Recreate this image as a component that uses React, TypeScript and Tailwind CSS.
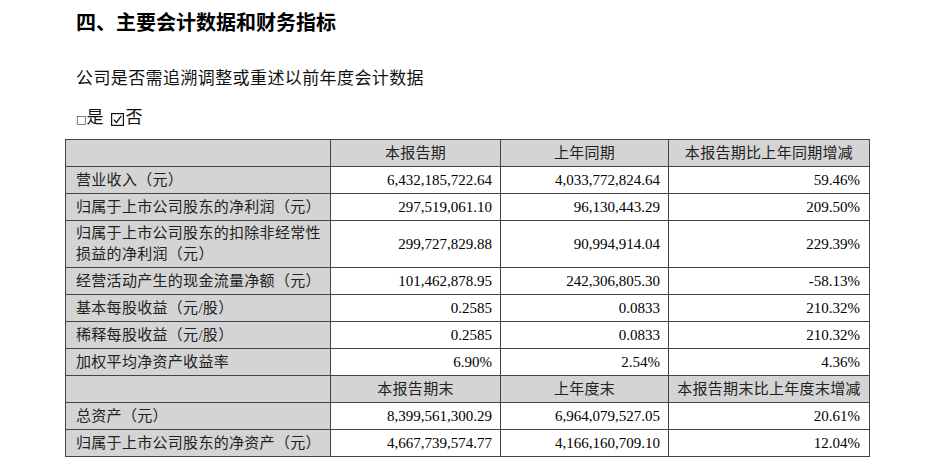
const font = "font-['Liberation_Serif','Noto_Sans_CJK_SC',serif]";

type Row = { label: string[]; cur: string; prev: string; change: string };

const top: Row[] = [
  { label: ["营业收入（元）"], cur: "6,432,185,722.64", prev: "4,033,772,824.64", change: "59.46%" },
  { label: ["归属于上市公司股东的净利润（元）"], cur: "297,519,061.10", prev: "96,130,443.29", change: "209.50%" },
  {
    label: ["归属于上市公司股东的扣除非经常性", "损益的净利润（元）"],
    cur: "299,727,829.88",
    prev: "90,994,914.04",
    change: "229.39%",
  },
  { label: ["经营活动产生的现金流量净额（元）"], cur: "101,462,878.95", prev: "242,306,805.30", change: "-58.13%" },
  { label: ["基本每股收益（元/股）"], cur: "0.2585", prev: "0.0833", change: "210.32%" },
  { label: ["稀释每股收益（元/股）"], cur: "0.2585", prev: "0.0833", change: "210.32%" },
  { label: ["加权平均净资产收益率"], cur: "6.90%", prev: "2.54%", change: "4.36%" },
];

const bottom: Row[] = [
  { label: ["总资产（元）"], cur: "8,399,561,300.29", prev: "6,964,079,527.05", change: "20.61%" },
  { label: ["归属于上市公司股东的净资产（元）"], cur: "4,667,739,574.77", prev: "4,166,160,709.10", change: "12.04%" },
];

function HeaderRow({ cols }: { cols: string[] }) {
  return (
    <tr className="h-[27px] bg-[#d4d4d4] text-[#222]">
      <td className="border border-[#444]" />
      {cols.map((c) => (
        <td key={c} className="border border-[#444] text-center tracking-[0.3px]">
          {c}
        </td>
      ))}
    </tr>
  );
}

function DataRow({ row }: { row: Row }) {
  const tall = row.label.length > 1;
  return (
    <tr className={tall ? "h-[47px]" : "h-[27px]"}>
      <td className="border border-[#444] bg-[#d4d4d4] pl-[10px] leading-[21px] tracking-[0.3px] text-[#222]">
        {row.label.map((l) => (
          <div key={l}>{l}</div>
        ))}
      </td>
      <td className="border border-[#444] pr-[8px] text-right">{row.cur}</td>
      <td className="border border-[#444] pr-[8px] text-right">{row.prev}</td>
      <td className="border border-[#444] pr-[9px] text-right">{row.change}</td>
    </tr>
  );
}

function CheckedBox() {
  return (
    <svg width="13" height="13" viewBox="0 0 13 13" className="mr-[1px] ml-[8px] self-center">
      <rect x="0.6" y="0.6" width="11.8" height="11.8" fill="none" stroke="#111" strokeWidth="1.2" />
      <path d="M2.8 6.6 L5.4 9.4 L10.4 2.8" fill="none" stroke="#111" strokeWidth="1.3" />
    </svg>
  );
}

export default function App() {
  return (
    <div className={`${font} min-h-[465px] w-[945px] bg-white pt-[8px] text-black`}>
      <h1 className="pl-[76px] text-[20px] leading-[28px] font-bold font-['Noto_Sans_CJK_SC',sans-serif]">
        四、主要会计数据和财务指标
      </h1>
      <p className="mt-[31px] pl-[76px] text-[17px] leading-[24px] tracking-[0.4px] text-[#111]">
        公司是否需追溯调整或重述以前年度会计数据
      </p>
      <p className="mt-[15px] flex items-baseline pl-[76px] text-[17px] leading-[24px] text-[#111]">
        <span className="text-[11px] font-['DejaVu_Sans',sans-serif]">□</span>
        <span>是</span>
        <CheckedBox />
        <span>否</span>
      </p>
      <table className="mt-[7px] ml-[65px] w-[804px] table-fixed border-collapse text-[15px]">
        <colgroup>
          <col className="w-[265px]" />
          <col className="w-[170px]" />
          <col className="w-[168px]" />
          <col className="w-[201px]" />
        </colgroup>
        <tbody>
          <HeaderRow cols={["本报告期", "上年同期", "本报告期比上年同期增减"]} />
          {top.map((r) => (
            <DataRow key={r.label[0]} row={r} />
          ))}
          <HeaderRow cols={["本报告期末", "上年度末", "本报告期末比上年度末增减"]} />
          {bottom.map((r) => (
            <DataRow key={r.label[0]} row={r} />
          ))}
        </tbody>
      </table>
    </div>
  );
}
